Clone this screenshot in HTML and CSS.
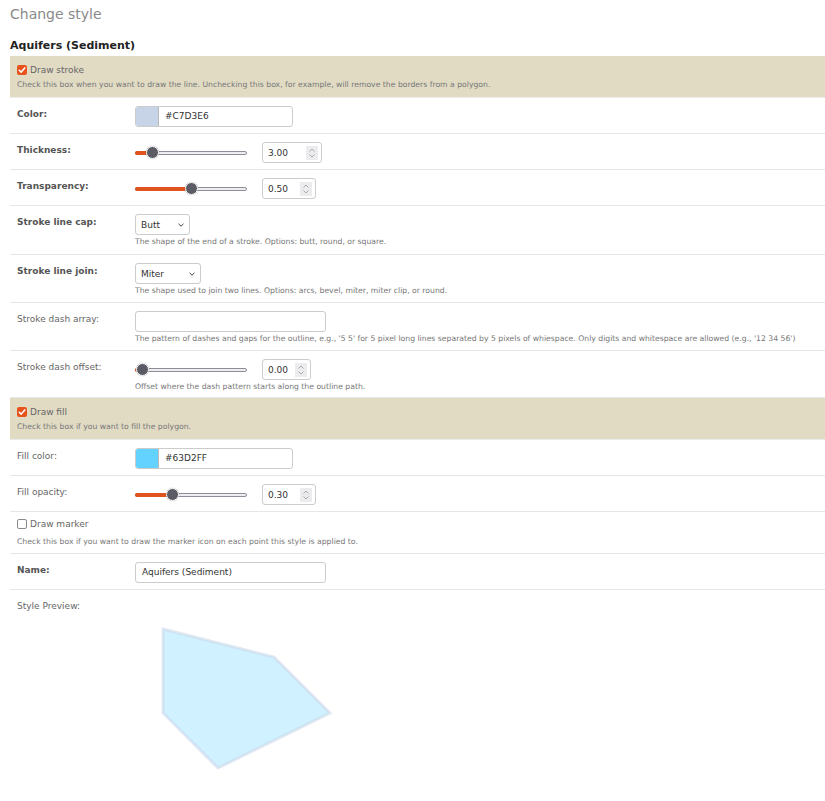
FILE: index.html
```html
<!DOCTYPE html>
<html>
<head>
<meta charset="utf-8">
<link rel="stylesheet" href="styles.css">
</head>
<body>
<div class="page">
  <h1 class="title">Change style</h1>
  <h2 class="subtitle">Aquifers (Sediment)</h2>

  <div class="band">
    <div class="check-line"><span class="cb cb-on"><svg viewBox="0 0 10 10"><path d="M2.3 5.2 L4.2 7.1 L7.8 2.9" fill="none" stroke="#fff" stroke-width="1.5" stroke-linecap="round" stroke-linejoin="round"/></svg></span><span class="check-label">Draw stroke</span></div>
    <div class="help band-help">Check this box when you want to draw the line. Unchecking this box, for example, will remove the borders from a polygon.</div>
  </div>

  <div class="row">
    <div class="label bold">Color:</div>
    <div class="ctrl">
      <div class="colorbox"><span class="swatch swatch-stroke"></span><span class="ctext">#C7D3E6</span></div>
    </div>
  </div>

  <div class="row">
    <div class="label bold">Thickness:</div>
    <div class="ctrl slider-line">
      <div class="slider"><div class="fill" style="width:17px"></div><div class="thumb" style="left:17px"></div></div>
      <div class="num num-60"><span>3.00</span><span class="spin"><svg viewBox="0 0 12 14"><path d="M3.5 5.5 L6 3 L8.5 5.5 M3.5 8.5 L6 11 L8.5 8.5" fill="none" stroke="#999" stroke-width="0.8"/></svg></span></div>
    </div>
  </div>

  <div class="row">
    <div class="label bold">Transparency:</div>
    <div class="ctrl slider-line">
      <div class="slider"><div class="fill" style="width:56px"></div><div class="thumb" style="left:56px"></div></div>
      <div class="num num-54"><span>0.50</span><span class="spin"><svg viewBox="0 0 12 14"><path d="M3.5 5.5 L6 3 L8.5 5.5 M3.5 8.5 L6 11 L8.5 8.5" fill="none" stroke="#999" stroke-width="0.8"/></svg></span></div>
    </div>
  </div>

  <div class="row row-cap">
    <div class="label bold">Stroke line cap:</div>
    <div class="ctrl">
      <div class="select sel-55"><span>Butt</span><svg class="chev" viewBox="0 0 8 6"><path d="M1.5 1.8 L4 4.2 L6.5 1.8" fill="none" stroke="#444" stroke-width="1"/></svg></div>
      <div class="help">The shape of the end of a stroke. Options: butt, round, or square.</div>
    </div>
  </div>

  <div class="row">
    <div class="label bold">Stroke line join:</div>
    <div class="ctrl">
      <div class="select sel-66"><span>Miter</span><svg class="chev" viewBox="0 0 8 6"><path d="M1.5 1.8 L4 4.2 L6.5 1.8" fill="none" stroke="#444" stroke-width="1"/></svg></div>
      <div class="help">The shape used to join two lines. Options: arcs, bevel, miter, miter clip, or round.</div>
    </div>
  </div>

  <div class="row">
    <div class="label">Stroke dash array:</div>
    <div class="ctrl">
      <div class="textbox tb-191"></div>
      <div class="help">The pattern of dashes and gaps for the outline, e.g., '5 5' for 5 pixel long lines separated by 5 pixels of whiespace. Only digits and whitespace are allowed (e.g., '12 34 56')</div>
    </div>
  </div>

  <div class="row row-offset">
    <div class="label">Stroke dash offset:</div>
    <div class="ctrl">
      <div class="slider-line">
        <div class="slider"><div class="fill" style="width:7px"></div><div class="thumb" style="left:7px"></div></div>
        <div class="num num-49"><span>0.00</span><span class="spin"><svg viewBox="0 0 12 14"><path d="M3.5 5.5 L6 3 L8.5 5.5 M3.5 8.5 L6 11 L8.5 8.5" fill="none" stroke="#999" stroke-width="0.8"/></svg></span></div>
      </div>
      <div class="help">Offset where the dash pattern starts along the outline path.</div>
    </div>
  </div>

  <div class="band">
    <div class="check-line"><span class="cb cb-on"><svg viewBox="0 0 10 10"><path d="M2.3 5.2 L4.2 7.1 L7.8 2.9" fill="none" stroke="#fff" stroke-width="1.5" stroke-linecap="round" stroke-linejoin="round"/></svg></span><span class="check-label">Draw fill</span></div>
    <div class="help band-help">Check this box if you want to fill the polygon.</div>
  </div>

  <div class="row">
    <div class="label">Fill color:</div>
    <div class="ctrl">
      <div class="colorbox"><span class="swatch swatch-fill"></span><span class="ctext">#63D2FF</span></div>
    </div>
  </div>

  <div class="row">
    <div class="label">Fill opacity:</div>
    <div class="ctrl slider-line">
      <div class="slider"><div class="fill" style="width:37px"></div><div class="thumb" style="left:37px"></div></div>
      <div class="num num-54"><span>0.30</span><span class="spin"><svg viewBox="0 0 12 14"><path d="M3.5 5.5 L6 3 L8.5 5.5 M3.5 8.5 L6 11 L8.5 8.5" fill="none" stroke="#999" stroke-width="0.8"/></svg></span></div>
    </div>
  </div>

  <div class="plain">
    <div class="check-line"><span class="cb cb-off"></span><span class="check-label">Draw marker</span></div>
    <div class="help band-help">Check this box if you want to draw the marker icon on each point this style is applied to.</div>
  </div>

  <div class="row">
    <div class="label bold">Name:</div>
    <div class="ctrl">
      <div class="textbox tb-191"><span class="ctext">Aquifers (Sediment)</span></div>
    </div>
  </div>

  <div class="preview">
    <div class="label">Style Preview:</div>
    <svg class="poly" width="220" height="160" viewBox="0 0 220 160">
      <polygon points="28,9 139,37 195,93 83,148 28,93" fill="#63D2FF" fill-opacity="0.3" stroke="#C7D3E6" stroke-opacity="0.5" stroke-width="3"/>
    </svg>
  </div>
</div>
</body>
</html>
```

FILE: styles.css
```css
html, body {
  margin: 0;
  padding: 0;
  background: #fff;
}
body {
  font-family: "DejaVu Sans", Verdana, sans-serif;
  color: #555;
}
.page {
  padding-left: 10px;
}
.title {
  margin: 0;
  padding-top: 5px;
  font-size: 14px;
  line-height: 18px;
  font-weight: normal;
  color: #8a8a8a;
}
.subtitle {
  margin: 0;
  padding-top: 15px;
  padding-bottom: 2px;
  font-size: 11px;
  line-height: 16px;
  font-weight: bold;
  color: #222;
}
.band {
  margin-top: 0;
  background: #e1dbc4;
  padding: 7px 7px 7px 7px;
  border-bottom: 1px solid #ebebeb;
}
.plain {
  padding: 5px 7px 6px 7px;
  border-bottom: 1px solid #e6e6e6;
}
.check-line {
  display: flex;
  align-items: center;
  height: 14px;
}
.cb {
  display: inline-flex;
  width: 10px;
  height: 10px;
  box-sizing: border-box;
  border-radius: 2px;
  margin-right: 3px;
}
.cb svg {
  width: 10px;
  height: 10px;
}
.cb-on {
  background: #e8531d;
}
.cb-off {
  border: 1px solid #8a8a8a;
  background: #fff;
}
.check-label {
  font-size: 9px;
  color: #666;
}
.help {
  font-size: 7.7px;
  line-height: 10px;
  color: #777;
  margin-top: 2px;
  white-space: nowrap;
}
.band-help {
  margin-top: 2px;
  line-height: 11px;
}
.plain .band-help {
  margin-top: 5px;
}
.row {
  display: grid;
  grid-template-columns: 118px 1fr;
  padding: 8px 0 6px 7px;
  border-bottom: 1px solid #e6e6e6;
}
.row-cap {
  padding-bottom: 7px;
}
.row-offset {
  padding-bottom: 5px;
}
.label {
  font-size: 9px;
  line-height: 17px;
  color: #666;
}
.bold {
  font-weight: bold;
  color: #555;
}
.ctrl {
  min-width: 0;
}
.colorbox {
  display: flex;
  align-items: stretch;
  width: 158px;
  height: 21px;
  box-sizing: border-box;
  border: 1px solid #ccc;
  border-radius: 3px;
  overflow: hidden;
}
.swatch {
  width: 22px;
  border-right: 1px solid #bbb;
}
.swatch-stroke { background: #c7d3e6; }
.swatch-fill { background: #63d2ff; }
.ctext {
  font-size: 9px;
  line-height: 19px;
  color: #333;
  padding-left: 6px;
}
.textbox {
  display: flex;
  height: 21px;
  box-sizing: border-box;
  border: 1px solid #ccc;
  border-radius: 3px;
}
.tb-191 { width: 191px; }
.slider-line {
  display: flex;
  align-items: center;
  height: 21px;
}
.slider {
  position: relative;
  width: 112px;
  height: 4px;
  box-sizing: border-box;
  border: 1px solid #8e8e98;
  border-radius: 2px;
  background: #eeeef1;
  margin-right: 15px;
}
.fill {
  position: absolute;
  left: -1px;
  top: -1px;
  height: 4px;
  background: #e0531f;
  border-radius: 2px;
}
.thumb {
  position: absolute;
  top: 50%;
  width: 13px;
  height: 13px;
  margin-left: -7px;
  margin-top: -7px;
  box-sizing: border-box;
  border-radius: 50%;
  background: #5b5b66;
  border: 1px solid #fff;
  box-shadow: 0 0 1px rgba(0,0,0,0.4);
}
.num {
  display: flex;
  align-items: center;
  justify-content: space-between;
  height: 21px;
  box-sizing: border-box;
  border: 1px solid #ccc;
  border-radius: 3px;
  padding: 0 3px 0 5px;
  font-size: 9px;
  color: #333;
}
.num-60 { width: 60px; }
.num-54 { width: 54px; }
.num-49 { width: 49px; }
.spin {
  display: inline-flex;
  width: 12px;
  height: 14px;
  background: #ececef;
}
.spin svg {
  width: 12px;
  height: 14px;
}
.select {
  display: flex;
  align-items: center;
  justify-content: space-between;
  height: 21px;
  box-sizing: border-box;
  border: 1px solid #ccc;
  border-radius: 3px;
  padding: 0 4px 0 5px;
  font-size: 9px;
  color: #333;
}
.sel-55 { width: 55px; }
.sel-66 { width: 66px; }
.chev {
  width: 8px;
  height: 6px;
}
.preview {
  padding: 8px 0 0 7px;
}
.poly {
  display: block;
  margin-left: 118px;
  margin-top: 5px;
}
```
